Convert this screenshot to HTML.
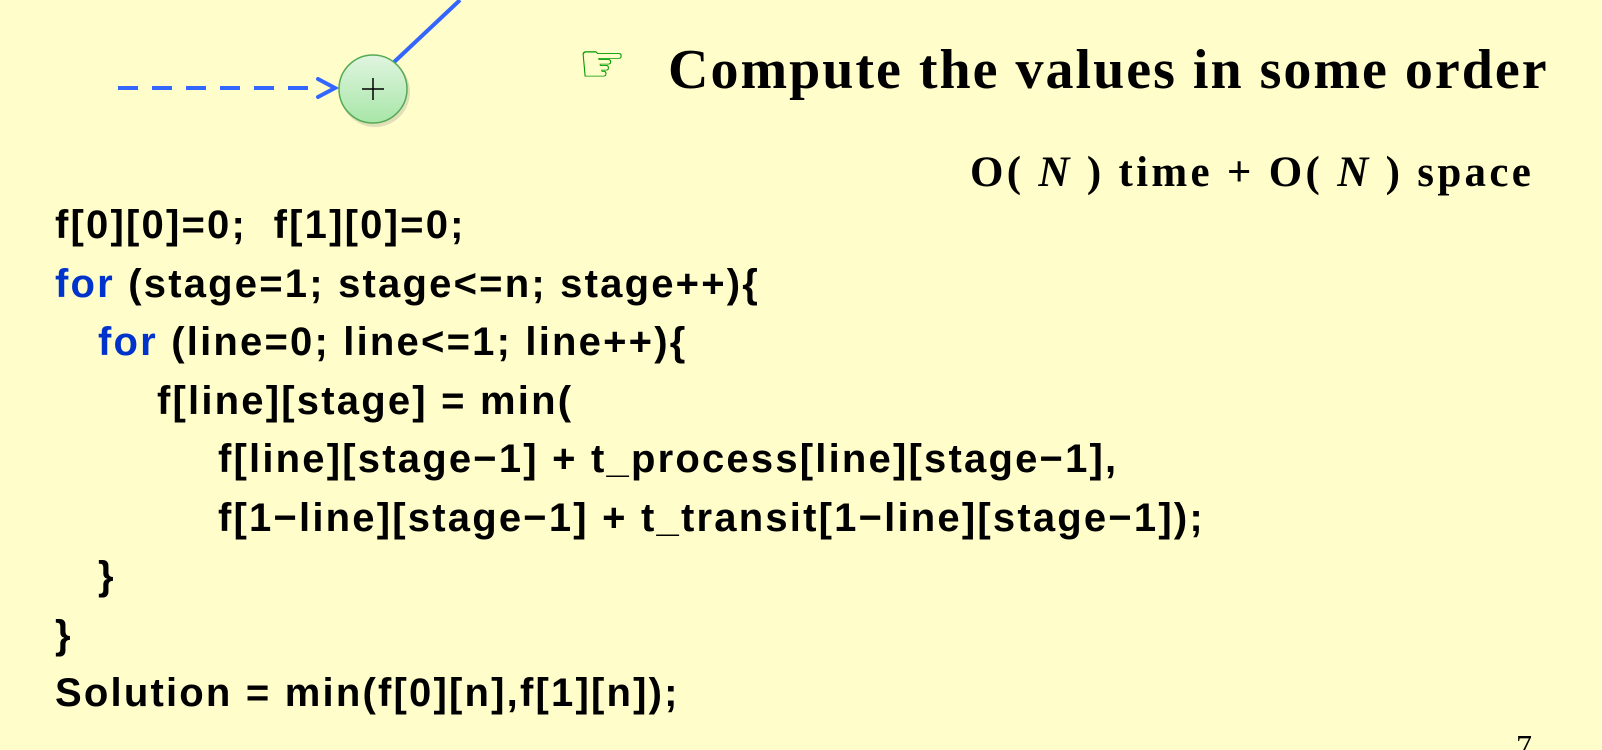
<!DOCTYPE html>
<html><head><meta charset="utf-8"><style>
html,body{margin:0;width:1602px;height:750px;background:#fffdc9;overflow:hidden}
body{position:relative}
.code{position:absolute;left:0;top:196px;font-family:"Liberation Sans",sans-serif;font-weight:bold;font-size:40px;line-height:58.5px;color:#000;letter-spacing:2.2px}
.code div{height:58.5px;white-space:pre}
.kw{color:#0033cc}
.h{position:absolute;left:668px;top:38px;font-family:"Liberation Serif",serif;font-weight:bold;font-size:56px;letter-spacing:2px;white-space:nowrap}
.s{position:absolute;left:970px;top:148px;font-family:"Liberation Serif",serif;font-weight:bold;font-size:43px;letter-spacing:3.3px;white-space:nowrap}
.p{position:absolute;left:1516px;top:728px;font-family:"Liberation Serif",serif;font-size:32px}
</style></head><body>
<svg width="700" height="130" style="position:absolute;left:0;top:0">
<defs><linearGradient id="g" x1="0" y1="0" x2="0" y2="1"><stop offset="0" stop-color="#e0f5e0"/><stop offset="1" stop-color="#a8e6a8"/></linearGradient></defs>
<line x1="118" y1="88" x2="322" y2="88" stroke="#3366ff" stroke-width="4" stroke-dasharray="20 14"/>
<polyline points="318,79 335,88 318,97" fill="none" stroke="#3366ff" stroke-width="4" stroke-linecap="round"/>
<line x1="392" y1="64" x2="460" y2="0" stroke="#3366ff" stroke-width="4"/>
<circle cx="375" cy="92" r="35" fill="#888" opacity="0.25"/>
<circle cx="373" cy="89" r="34" fill="url(#g)" stroke="#55aa55" stroke-width="1.5"/>
<line x1="362" y1="89" x2="384" y2="89" stroke="#000" stroke-width="1.5"/>
<line x1="373" y1="78" x2="373" y2="100" stroke="#000" stroke-width="1.5"/>
</svg>
<div style="position:absolute;left:578px;top:34px;color:#009900;font-size:54px;line-height:60px;font-family:'DejaVu Sans',sans-serif;font-weight:bold">☞</div>
<div class="h">Compute the values in some order</div>
<div class="s">O( <i>N</i> ) time + O( <i>N</i> ) space</div>
<div class="code"><div style="padding-left:55px">f[0][0]=0;  f[1][0]=0;</div><div style="padding-left:55px"><span class="kw">for</span> (stage=1; stage&lt;=n; stage++){</div><div style="padding-left:98px"><span class="kw">for</span> (line=0; line&lt;=1; line++){</div><div style="padding-left:157px">f[line][stage] = min(</div><div style="padding-left:218px">f[line][stage−1] + t_process[line][stage−1],</div><div style="padding-left:218px">f[1−line][stage−1] + t_transit[1−line][stage−1]);</div><div style="padding-left:98px">}</div><div style="padding-left:55px">}</div><div style="padding-left:55px">Solution = min(f[0][n],f[1][n]);</div></div>
<div class="p">7</div>
</body></html>
